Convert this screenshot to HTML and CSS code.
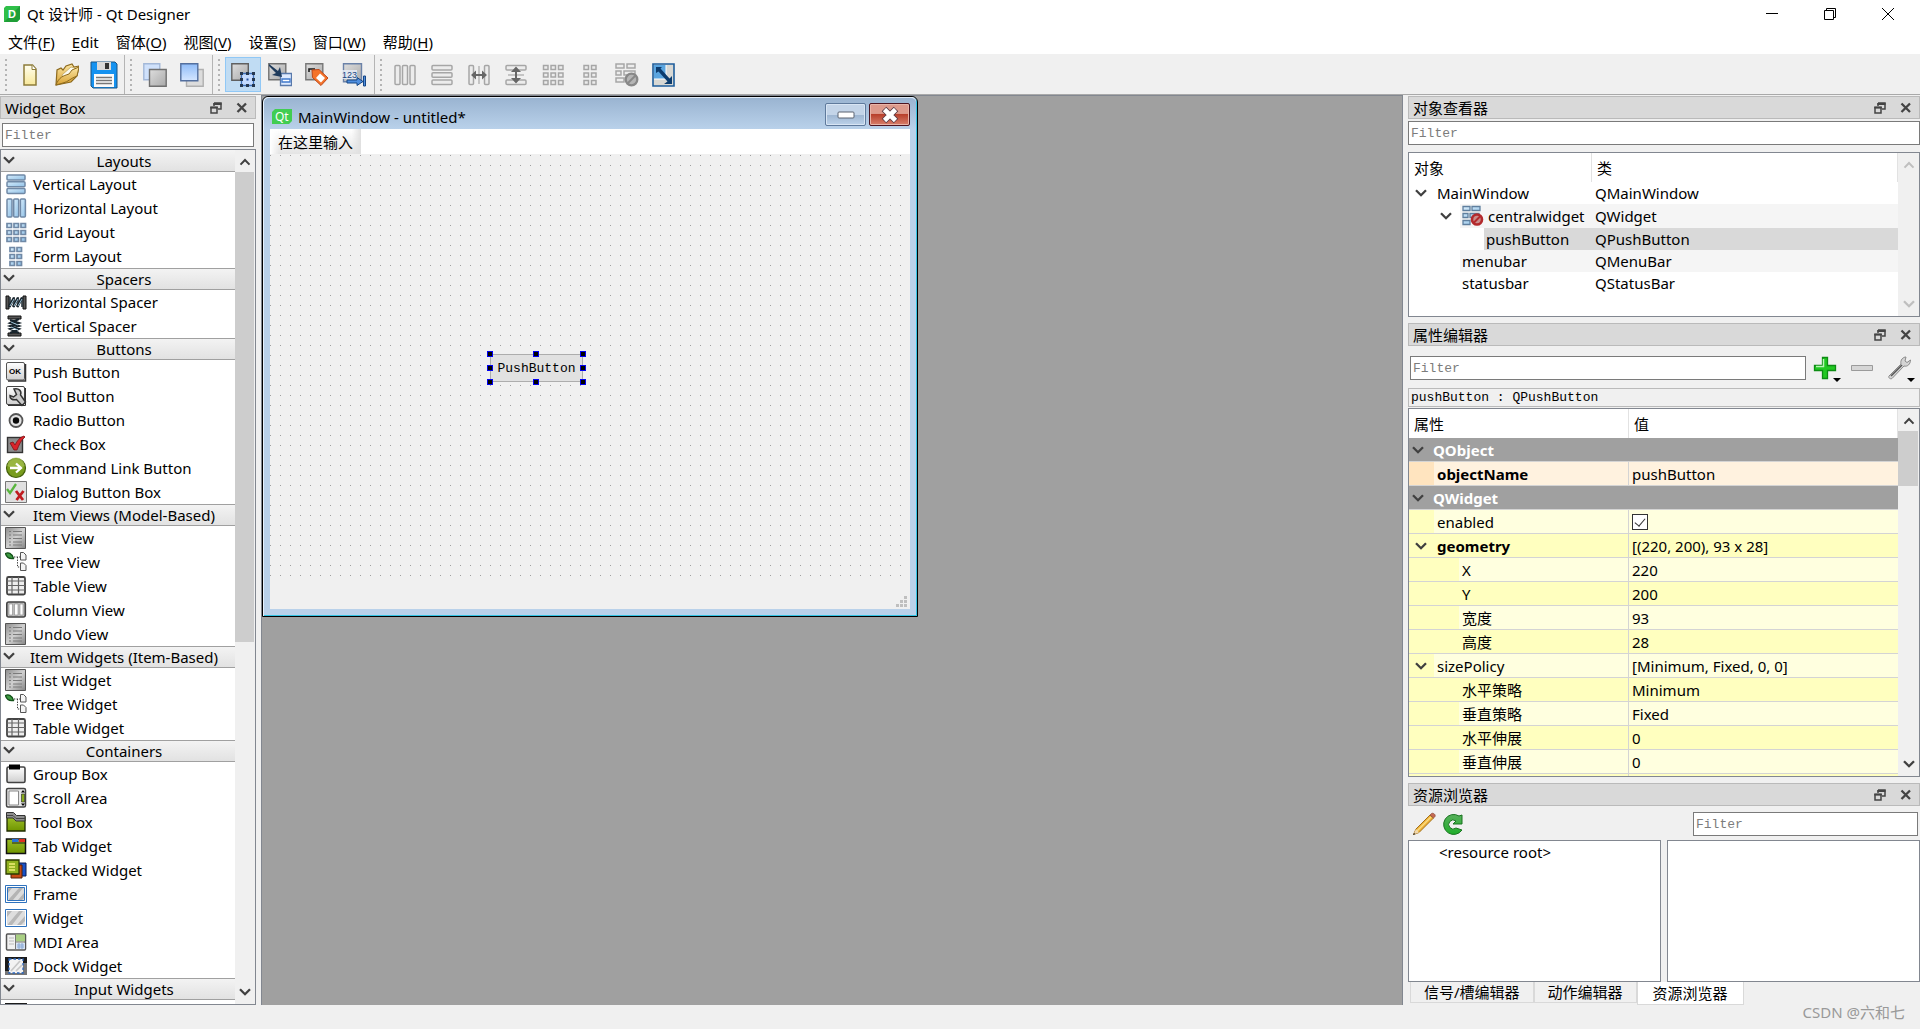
FILE: index.html
```html
<!DOCTYPE html>
<html lang="zh-CN">
<head>
<meta charset="utf-8">
<title>Qt 设计师 - Qt Designer</title>
<link rel="stylesheet" href="styles.css">
</head>
<body>
<svg class="defs" aria-hidden="true">
  <defs>
    <linearGradient id="g-blue" x1="0" y1="0" x2="1" y2="1"><stop offset="0" stop-color="#d6ecfb"/><stop offset="1" stop-color="#8fc0e6"/></linearGradient>
    <linearGradient id="g-pane" x1="0" y1="0" x2="0" y2="1"><stop offset="0" stop-color="#8fbcf8"/><stop offset="1" stop-color="#d5e6ff"/></linearGradient>
    <linearGradient id="g-gray" x1="0" y1="0" x2="1" y2="1"><stop offset="0" stop-color="#dedede"/><stop offset="1" stop-color="#a9a9a9"/></linearGradient>
    <linearGradient id="g-light" x1="0" y1="0" x2="0" y2="1"><stop offset="0" stop-color="#fff"/><stop offset="1" stop-color="#cfcfcf"/></linearGradient>
    <linearGradient id="g-olive" x1="0" y1="0" x2="0" y2="1"><stop offset="0" stop-color="#9cbd28"/><stop offset="1" stop-color="#6f9500"/></linearGradient>
    <linearGradient id="g-folder" x1="0" y1="0" x2="0" y2="1"><stop offset="0" stop-color="#fbe6a4"/><stop offset="1" stop-color="#d9a233"/></linearGradient>
    <linearGradient id="g-page" x1="0" y1="0" x2="0" y2="1"><stop offset="0" stop-color="#fffef0"/><stop offset="1" stop-color="#f8e89a"/></linearGradient>
    <linearGradient id="g-green" x1="0" y1="0" x2="0" y2="1"><stop offset="0" stop-color="#58b05c"/><stop offset="1" stop-color="#1fae2a"/></linearGradient>
    <linearGradient id="g-list" x1="0" y1="0" x2="1" y2="1"><stop offset="0" stop-color="#8c8c8c"/><stop offset=".5" stop-color="#d0d0d0"/><stop offset="1" stop-color="#858585"/></linearGradient>
  </defs>
  <symbol id="chev" viewBox="0 0 12 8"><path d="M1 1.2 6 6.2 11 1.2" fill="none" stroke="currentColor" stroke-width="2.3"/></symbol>
  <symbol id="chev-up" viewBox="0 0 12 8"><path d="M1.5 6.6 6 2 10.500 6.600" fill="none" stroke="currentColor" stroke-width="2"/></symbol>
  <symbol id="float" viewBox="0 0 12 12"><path d="M4 1h7v6H8M4 4V1" fill="none" stroke="#444" stroke-width="1.500"/><path d="M3.500 1h8v2h-8z" fill="#444"/><path d="M1 5.500h6V11H1z" fill="none" stroke="#444" stroke-width="1.500"/><path d="M.3 4.500h7.500v2H.3z" fill="#444"/></symbol>
  <symbol id="cross" viewBox="0 0 12 12"><path d="M1.500 1.500l8.500 8.500M10 1.500 1.500 10" stroke="#444" stroke-width="2.300"/></symbol>

  <symbol id="vbox" viewBox="0 0 22 22"><g fill="url(#g-blue)" stroke="#7089a6" stroke-width="1.500"><rect x="2" y="2" width="18" height="5" rx="1"/><rect x="2" y="8.700" width="18" height="5" rx="1"/><rect x="2" y="15.400" width="18" height="5" rx="1"/></g></symbol>
  <symbol id="hbox" viewBox="0 0 22 22"><g fill="url(#g-blue)" stroke="#7089a6" stroke-width="1.500"><rect x="2" y="2" width="5" height="18" rx="1"/><rect x="8.700" y="2" width="5" height="18" rx="1"/><rect x="15.400" y="2" width="5" height="18" rx="1"/></g></symbol>
  <symbol id="grid" viewBox="0 0 22 22"><g fill="url(#g-blue)" stroke="#7089a6" stroke-width="1.700"><path d="M2 2.500h4.500v4H2zM9 2.500h4.500v4H9zM16 2.500h4.500v4H16zM2 9.500h4.500v4H2zM9 9.500h4.500v4H9zM16 9.500h4.500v4H16zM2 16.500h4.500v4H2zM9 16.500h4.500v4H9zM16 16.500h4.500v4H16z"/></g></symbol>
  <symbol id="form" viewBox="0 0 22 22"><g fill="url(#g-blue)" stroke="#7089a6" stroke-width="1.700"><path d="M5 2.500h4.500v4H5zM12 2.500h4.500v4H12zM5 9.500h4.500v4H5zM12 9.500h4.500v4H12zM5 16.500h4.500v4H5zM12 16.500h4.500v4H12z"/></g></symbol>
  <symbol id="hspacer" viewBox="0 0 22 22"><path d="M1 5h3v13H1zM18 5h3v13h-3z" fill="#555" stroke="#111"/><path d="M5 6v10M9 6v10M13 6v10M17 6v10" stroke="#1c2930" stroke-width="1.500"/><path d="M4 16l5-9M8 16l5-9M12 16l5-9" stroke="#18242c" stroke-width="2.600"/><path d="M5 15l4-7M9 15l4-7M13 15l4-7" stroke="#9bc0d4" stroke-width="1"/></symbol>
  <symbol id="vspacer" viewBox="0 0 22 22"><path d="M3 1h13v3H3zM3 18h13v3H3z" fill="#555" stroke="#111"/><path d="M5 5l9 3-9 3 9 3-9 4M14 4 5 8l9 3-9 3 9 4" fill="none" stroke="#18242c" stroke-width="2"/><path d="M6 7l7 3M6 12l7 3" stroke="#9bc0d4"/></symbol>
  <symbol id="push" viewBox="0 0 22 22"><rect x="1.500" y="1.500" width="18" height="17.500" rx="1.500" fill="url(#g-light)" stroke="#555"/><path d="M20.500 3v17H3" fill="none" stroke="#333" stroke-width="1.500"/></symbol>
  <symbol id="tool" viewBox="0 0 22 22"><rect x="1.500" y="1.500" width="18" height="18" rx="1.500" fill="url(#g-light)" stroke="#444"/><path d="M20.500 3v17.500H3" fill="none" stroke="#333"/><path d="M9 4c5-1 8 2 6.500 6L20.500 17l-3.500 3.500-5.500-6c-4 1-7-1-6.500-4l3.500 1.500 3-2.500z" fill="#c9c9c9" stroke="#333" stroke-width="1.500"/></symbol>
  <symbol id="radio" viewBox="0 0 22 22"><circle cx="11" cy="11.500" r="6.500" fill="#e4e4e4" stroke="#555" stroke-width="1.800"/><circle cx="11" cy="11.500" r="3.200" fill="#0a0a0a"/></symbol>
  <symbol id="check" viewBox="0 0 22 22"><rect x="2.500" y="4.500" width="15" height="15" fill="#8b8b8b" stroke="#333" stroke-width="1.400"/><path d="M5 10l3-1 2 3c2-4 5-8 9-9l1 1c-4 3-6 8-8 13h-3z" fill="#d8242a" stroke="#7d1014" stroke-width=".8"/></symbol>
  <symbol id="cmdlink" viewBox="0 0 22 22"><circle cx="11" cy="11" r="9.500" fill="#789c1d" stroke="#44600b" stroke-width="1.200"/><path d="M2.500 9a8.500 8.500 0 0 1 17 0c-5 3-12 3-17 0z" fill="#a7c253" opacity=".7"/><path d="M5 11h10M11 6.500l5 4.500-5 4.500" fill="none" stroke="#fff" stroke-width="2.300"/></symbol>
  <symbol id="dlgbox" viewBox="0 0 22 22"><path d="M.5.500h21v21H.5z" fill="#e0e0e0" stroke="#777"/><path d="M2 8l3 4 6-9" fill="none" stroke="#59b53e" stroke-width="2.300"/><path d="M11 10l7 9M18.500 10l-7 9" stroke="#c01c20" stroke-width="2.800"/></symbol>
  <symbol id="list" viewBox="0 0 22 22"><path d="M.5.500h20v21H.5z" fill="url(#g-list)" stroke="#555"/><path d="M4 4.500h2m2 0h9M4 8h2m2 0h9M4 11.500h2m2 0h9M4 15h2m2 0h9M4 18h2m2 0h9" stroke="#7b7b7b"/></symbol>
  <symbol id="tree" viewBox="0 0 22 22"><path d="M.500 2.500C3 1 7 2 8.500 7.500 5 8 1.500 6.500.500 2.500z" fill="#3c9a41" stroke="#14521a" stroke-width="1.300"/><path d="M9 6h6M12.500 6v10h4" fill="none" stroke="#333" stroke-dasharray="1.300 1.300"/><path d="M15.500 1.500h3l2.500 2.500v5h-5.500zM15.500 12h3l2.500 2.500v5h-5.500z" fill="#f4f4f4" stroke="#555"/></symbol>
  <symbol id="table" viewBox="0 0 22 22"><rect x="2" y="2" width="18" height="17.500" rx="1.500" fill="#eee" stroke="#444" stroke-width="1.800"/><path d="M2 6h18M2 10.500h18M2 15h18M7 2v17M13.500 2v17" stroke="#666" stroke-width="1.200"/></symbol>
  <symbol id="column" viewBox="0 0 22 22"><rect x="1.800" y="3" width="18.500" height="15" rx="2" fill="#bcbcbc" stroke="#444" stroke-width="1.600"/><path d="M4 5h3.500v11H4zM9.500 5H13v11H9.500zM15 5h3v11h-3z" fill="#fff" stroke="#888" stroke-width=".6"/></symbol>
  <symbol id="group" viewBox="0 0 22 22"><rect x="2" y="4" width="18" height="15.500" rx="1.500" fill="url(#g-light)" stroke="#444" stroke-width="1.600"/><path d="M4 1.500h11v5H4z" fill="#000"/></symbol>
  <symbol id="scroll" viewBox="0 0 22 22"><rect x="1.500" y="1.500" width="19" height="18.500" rx="1.500" fill="#e6e6e6" stroke="#444" stroke-width="1.500"/><path d="M4 4h9.500v14H4z" fill="#fff" stroke="#888"/><path d="M16.500 7h3v8h-3z" fill="#88ab1c" stroke="#222" stroke-width=".6"/><path d="M16 5.500h4L18 3zM16 16.500h4L18 19z"/></symbol>
  <symbol id="toolbox" viewBox="0 0 22 22"><path d="M2 6h18v14H2z" fill="url(#g-olive)" stroke="#1e2a00" stroke-width="1.300"/><path d="M1.500 1.500h7l3 3h8.500v5.500h-9l-3-3h-6.500z" fill="#8f8f8f" stroke="#333"/><path d="M2 4.500h6l3 3h9" fill="none" stroke="#444"/></symbol>
  <symbol id="tabs" viewBox="0 0 22 22"><path d="M1.500 4h19v14.500h-19z" fill="url(#g-olive)" stroke="#111" stroke-width="1.500"/><path d="M7 4h6.500v3H7z" fill="#2870d8"/><path d="M14 4h6v3h-6z" fill="#e03020"/><path d="M7 8h13" stroke="#222"/></symbol>
  <symbol id="stack" viewBox="0 0 22 22"><path d="M11 4h10v13H11z" fill="#1852c8" stroke="#0a1c55"/><path d="M6 6h11v13H6z" fill="#c74a14" stroke="#55200a"/><path d="M1 1h13v14H1z" fill="#8fb01f" stroke="#2c3a00" stroke-width="1.300"/><path d="M4 5h6M4 8h6M4 11h6" stroke="#f2ee7a" stroke-width="1.300"/></symbol>
  <symbol id="frame" viewBox="0 0 22 22"><path d="M.5 2.500h21v17H.5z" fill="#fff" stroke="#2f72bd"/><path d="M2.500 4.500h17v13h-17z" fill="#dcdcdc" stroke="#2f72bd"/><path d="M4 16 14 5h4L8 17H4zM13 17l6-7v5l-2 2zM3 5h4L3 10z" fill="#b4b4b4"/></symbol>
  <symbol id="widget" viewBox="0 0 22 22"><path d="M.5 2.500h21v17H.5z" fill="#fff" stroke="#2f72bd"/><path d="M2 4h18v14H2z" fill="#dedede"/><path d="M3 17 14 4h4L7 18H3zM12 18l8-9v5l-4 4zM2 4h5L2 10z" fill="#b8b8b8"/></symbol>
  <symbol id="mdi" viewBox="0 0 22 22"><rect x="1.500" y="3" width="19" height="16" rx="1" fill="#f1f1f1" stroke="#555" stroke-width="1.500"/><path d="M11 3.500h9v7h-9z" fill="#a9cf83"/><path d="M4 7h5M4 10h5M4 13h5" stroke="#bbb"/><path d="M11 12h9v6h-9z" fill="#d8e4f4"/><path d="M11 11h9M10.500 4v14" stroke="#777"/><path d="M12 14h7M12 16h7M14 12v6M17 12v6" stroke="#8aa9d4"/></symbol>
  <symbol id="dock" viewBox="0 0 22 22"><path d="M0 2h22v18H0z" fill="#1b1b1b"/><path d="M18 8h4v12H0v-4h18z" fill="#777"/><rect x="4" y="4" width="14" height="14" fill="#f3f3f3" stroke="#2a65bd" stroke-width="1.300" stroke-dasharray="2.500 2"/><path d="M6 16 15 6M11 16l6-6" stroke="#c8c8c8" stroke-width="1.700"/></symbol>

  <symbol id="new" viewBox="0 0 24 24"><path d="M6 2h8.500l3.500 4v16H6z" fill="url(#g-page)" stroke="#8d7c3a" stroke-width="1.500"/><path d="M14 2v4.500h4" fill="#fff" stroke="#8d7c3a"/></symbol>
  <symbol id="open" viewBox="0 0 24 24"><path d="M1 22 2 7l4-2 2 2 3-4 6-2 2 3 5-1-2 10-6 6z" fill="url(#g-folder)" stroke="#8d6a1e" stroke-width="1.200"/><path d="M7 12 16 4l4 1-1 5-9 9z" fill="#fbfbf2" stroke="#b99c50" stroke-width=".7"/><path d="M1 22c3-8 7-9 13-11l3-4 7-3-2 9c-6 2-9 6-14 7z" fill="url(#g-folder)" stroke="#8d6a1e"/></symbol>
  <symbol id="save" viewBox="0 0 28 28"><path d="M1 1h24l2 2v24H3l-2-2z" fill="#1592f0" stroke="#1b5584"/><path d="M7 1h14v8H7z" fill="#d9d9d9"/><path d="M15 2h4v6h-4z" fill="#333"/><path d="M4 13h20v13H4z" fill="#fafafa"/><path d="M6 16.500h16M6 19.500h16M6 22.500h16" stroke="#777" stroke-width="1.300"/></symbol>
  <symbol id="back" viewBox="0 0 24 24"><path d="M.8.800h16v16H.8z" fill="#cfe1fb" stroke="#a3b8d8" stroke-width="1.400"/><path d="M6.500 6.500h16.700v16.700H6.500z" fill="url(#g-gray)" stroke="#707070" stroke-width="1.400"/></symbol>
  <symbol id="front" viewBox="0 0 24 24"><path d="M6.500 6.500h16.700v16.700H6.500z" fill="#dcdcdc" stroke="#b0b0b0" stroke-width="1.400"/><path d="M.8.800h17v17H.8z" fill="url(#g-pane)" stroke="#536f9e" stroke-width="1.400"/></symbol>
  <symbol id="editw" viewBox="0 0 24 24"><path d="M.8.800h16.500v16.500H.8z" fill="url(#g-gray)" stroke="#606060" stroke-width="1.400"/><path d="M10.500 10.500h12v12h-12z" fill="#c5dcff" stroke="#3e6fb8" stroke-width="1.300"/><path d="M9 9h3v3H9zM15 9h3v3h-3zM21 9h3v3h-3zM9 15h3v3H9zM21 15h3v3h-3zM9 21h3v3H9zM15 21h3v3h-3zM21 21h3v3h-3z" fill="#26384f"/><path d="M15.500 15.500h2v2h-2z" fill="#2453a0"/></symbol>
  <symbol id="signals" viewBox="0 0 24 24"><path d="M.8.800h17v16h-17z" fill="url(#g-gray)" stroke="#707070" stroke-width="1.400"/><path d="M12.500 10.500h11v12h-11z" fill="#ddeaff" stroke="#5879ab" stroke-width="1.300"/><path d="M14 16h8v3h-8z" fill="#fff" stroke="#3f78cc" stroke-width="1.300"/><path d="M1 1l9 7 2-4 2 10-10-2 4-2-7-7z" fill="#1f3b5c"/></symbol>
  <symbol id="buddy" viewBox="0 0 24 24"><path d="M.8.800h17v16h-17z" fill="url(#g-gray)" stroke="#777" stroke-width="1.400"/><path d="M4 9V6h6" fill="none" stroke="#1d1d1d" stroke-width="1.600"/><path d="M7 7l7-.5 9 8.500-7 7.500-8.500-8z" fill="#f4732a" stroke="#bd481a"/><path d="M15 10.500l5 4.500-4 4.500-5-4.500z" fill="#fff"/></symbol>
  <symbol id="order" viewBox="0 0 26 24"><path d="M2.500.800h18v18h-18z" fill="url(#g-gray)" stroke="#6b82a8" stroke-width="1.400"/><path d="M1 7h15v9H1z" fill="#e8eef8" opacity=".8"/><path d="M6 17h10v-2.500l6 4-6 4V20H6z" fill="#4f8fe0" stroke="#174684"/><path d="M22.500 13h2v10h-2z" fill="#4f8fe0" stroke="#174684"/></symbol>
  <symbol id="t-h" viewBox="0 0 24 24"><g class="tg"><rect x="2" y="2.500" width="5" height="19" rx="1"/><rect x="9.500" y="2.500" width="5" height="19" rx="1"/><rect x="17" y="2.500" width="5" height="19" rx="1"/></g></symbol>
  <symbol id="t-v" viewBox="0 0 24 24"><g class="tg"><rect x="2" y="2.500" width="20" height="4.500" rx="1"/><rect x="2" y="9.800" width="20" height="4.500" rx="1"/><rect x="2" y="17" width="20" height="4.500" rx="1"/></g></symbol>
  <symbol id="t-hs" viewBox="0 0 24 24"><g class="tg"><rect x="2" y="2.500" width="4.500" height="19" rx="1"/><rect x="17.500" y="2.500" width="4.500" height="19" rx="1"/></g><path d="M12 3v18" stroke="#999"/><path d="M4 12l5-4.500V11h6V7.500l5 4.500-5 4.500V13H9v3.500z" fill="#666"/></symbol>
  <symbol id="t-vs" viewBox="0 0 24 24"><g class="tg"><rect x="2" y="2.500" width="20" height="4.500" rx="1"/><rect x="2" y="17" width="20" height="4.500" rx="1"/></g><path d="M4 12h16" stroke="#999"/><path d="M12 3.500l5 5.500h-4v6h4l-5 5.500L7 15h4V9H7z" fill="#666"/></symbol>
  <symbol id="t-g" viewBox="0 0 24 24"><path class="tg" d="M2.500 2.500h4.500v4H2.500zM10 2.500h4.500v4H10zM17.500 2.500H22v4h-4.500zM2.500 10h4.500v4H2.500zM10 10h4.500v4H10zM17.500 10H22v4h-4.500zM2.500 17.500h4.500v4H2.500zM10 17.500h4.500v4H10zM17.500 17.500H22v4h-4.500z"/></symbol>
  <symbol id="t-f" viewBox="0 0 24 24"><path class="tg" d="M6 2.500h4.500v4H6zM13.500 2.500H18v4h-4.500zM6 10h4.500v4H6zM13.500 10H18v4h-4.500zM6 17.500h4.500v4H6zM13.500 17.500H18v4h-4.500z"/></symbol>
  <symbol id="t-b" viewBox="0 0 24 24"><path class="tg" d="M1 1h8v4H1zM12 1h8v4h-8zM1 8h5v4H1zM9 8h11v4H9zM1 15h8v4H1z"/><circle cx="16.500" cy="16.500" r="5.800" fill="#b5b5b5" stroke="#888" stroke-width="2.300"/><path d="M13 20l7-7" stroke="#888" stroke-width="2"/></symbol>
  <symbol id="adjust" viewBox="0 0 24 24"><path d="M1 1h21v22H1z" fill="#d8d8d4" stroke="#1f5e9c" stroke-width="1.600"/><path d="M2 2h12v14H2z" fill="#5aa5e0"/><path d="M14 2v14H2" fill="none" stroke="#fff"/><path d="M4 4h6L8.500 5.500l9 10L20 13v8h-8l3.500-2.500-9-10L4 10z" fill="#0c3c6e"/></symbol>
  <symbol id="broken" viewBox="0 0 22 22"><g fill="url(#g-blue)" stroke="#5f7f9e" stroke-width="1.300"><path d="M1 1.500h7v4H1zM10 1.500h8v4h-8zM1 8.500h5v4H1zM8 8.500h9v4H8zM1 15.500h7v4H1z"/></g><circle cx="15" cy="14.500" r="5" fill="#c98b8b" stroke="#b3292c" stroke-width="2.600"/><path d="M11.500 18l7-7" stroke="#b3292c" stroke-width="2"/></symbol>
  <symbol id="plus" viewBox="0 0 24 24"><path d="M9.500 1.500h5v8h8v5h-8v8h-5v-8h-8v-5h8z" fill="#22c822" stroke="#0e8c14" stroke-width="1.300"/><path d="M10.500 3v7.500H3" fill="none" stroke="#b8f5b4" stroke-width="1.500"/></symbol>
  <symbol id="minus" viewBox="0 0 24 24"><path d="M1.500 9.500h21v5h-21z" fill="#d6d6d6" stroke="#9b9b9b"/></symbol>
  <symbol id="wrench" viewBox="0 0 24 24"><path d="M2 20 14 8c-1-4 2-7 5-7l-1 4 2 1.500L23.500 4c0 4-3 7-6.500 6L5 22.500c-2 1-4-1-3-2.500z" fill="#d4d4d4" stroke="#8a8a8a"/><path d="M4 20 15 9" stroke="#555" stroke-width="1.600"/></symbol>
  <symbol id="pencil" viewBox="0 0 24 24"><path d="M1.500 22.500 4 17 18 3l3.500 3L7 20.500z" fill="#eeb236" stroke="#a36f1b"/><path d="M5 19 19 5" stroke="#fbdc83" stroke-width="1.500"/><path d="M1.500 22.500 4 17l3 3.500z" fill="#f0d8ae"/><path d="M1 23l1-2 1.500 1z" fill="#222"/><path d="M18 3l1.500-1.500c1.500-1 4.500 1 3.500 3L21.500 6z" fill="#c56a52" stroke="#8d4b3c" stroke-width=".7"/></symbol>
  <symbol id="reload" viewBox="0 0 22 22"><path d="M20 17A10 10 0 1 1 17 3l3-1v9h-9l3-3a4.500 4.500 0 1 0 0 7z" fill="url(#g-green)" stroke="#18731f"/></symbol>
</svg>

<header class="titlebar">
  <svg class="app-logo" viewBox="0 0 16 16"><path d="M2 0h14v13l-3 3H0V2z" fill="#2fbf49"/><path d="M0 16 16 0v13l-3 3z" fill="#1f9e37"/><text x="4" y="12" class="logo-d">D</text></svg>
  <h1 class="title">Qt 设计师 - Qt Designer</h1>
  <div class="win-controls">
    <button type="button" aria-label="最小化"><svg width="12" height="12"><path d="M0 5.500h12" stroke="#000"/></svg></button>
    <button type="button" aria-label="还原"><svg width="14" height="14" fill="none" stroke="#000"><path d="M1.500 3.500h9v9h-9zM3.500 3V1.500h9v9H11"/></svg></button>
    <button type="button" aria-label="关闭"><svg width="14" height="14"><path d="M1 1l12 12M13 1 1 13" stroke="#000"/></svg></button>
  </div>
</header>

<nav class="menubar">
  <button type="button">文件(<u>F</u>)</button>
  <button type="button"><u>E</u>dit</button>
  <button type="button">窗体(<u>O</u>)</button>
  <button type="button">视图(<u>V</u>)</button>
  <button type="button">设置(<u>S</u>)</button>
  <button type="button">窗口(<u>W</u>)</button>
  <button type="button">帮助(<u>H</u>)</button>
</nav>

<div class="toolbar" role="toolbar">
  <div class="tool-group">
    <button type="button" aria-label="新建"><svg class="i24"><use href="#new"/></svg></button>
    <button type="button" aria-label="打开"><svg class="i24"><use href="#open"/></svg></button>
    <button type="button" aria-label="保存"><svg class="i28"><use href="#save"/></svg></button>
  </div>
  <div class="tool-group">
    <button type="button" aria-label="置后"><svg class="i24"><use href="#back"/></svg></button>
    <button type="button" aria-label="置前"><svg class="i24"><use href="#front"/></svg></button>
  </div>
  <div class="tool-group">
    <button type="button" class="active" aria-label="编辑窗口部件" aria-pressed="true"><svg class="i24"><use href="#editw"/></svg></button>
    <button type="button" aria-label="编辑信号/槽"><svg class="i24"><use href="#signals"/></svg></button>
    <button type="button" aria-label="编辑伙伴"><svg class="i24"><use href="#buddy"/></svg></button>
    <button type="button" aria-label="编辑 Tab 顺序"><svg class="i26"><use href="#order"/><text x="1" y="15" class="order-text">123</text></svg></button>
  </div>
  <div class="tool-group">
    <button type="button" aria-label="水平布局"><svg class="i24"><use href="#t-h"/></svg></button>
    <button type="button" aria-label="垂直布局"><svg class="i24"><use href="#t-v"/></svg></button>
    <button type="button" aria-label="水平分裂器布局"><svg class="i24"><use href="#t-hs"/></svg></button>
    <button type="button" aria-label="垂直分裂器布局"><svg class="i24"><use href="#t-vs"/></svg></button>
    <button type="button" aria-label="栅格布局"><svg class="i24"><use href="#t-g"/></svg></button>
    <button type="button" aria-label="窗体布局"><svg class="i24"><use href="#t-f"/></svg></button>
    <button type="button" aria-label="打破布局"><svg class="i24"><use href="#t-b"/></svg></button>
    <button type="button" aria-label="调整大小"><svg class="i24"><use href="#adjust"/></svg></button>
  </div>
</div>

<main class="workspace">
  <aside class="dock widget-box">
    <div class="dock-title"><h2>Widget Box</h2><button type="button" aria-label="浮动"><svg><use href="#float"/></svg></button><button type="button" aria-label="关闭"><svg><use href="#cross"/></svg></button></div>
    <input class="filter box-filter" type="text" placeholder="Filter" aria-label="Filter">
    <div class="frame box-frame">
      <div class="box-list">
        <button type="button" class="cat"><svg class="arrow"><use href="#chev"/></svg>Layouts</button>
        <ul>
          <li><svg><use href="#vbox"/></svg>Vertical Layout</li>
          <li><svg><use href="#hbox"/></svg>Horizontal Layout</li>
          <li><svg><use href="#grid"/></svg>Grid Layout</li>
          <li><svg><use href="#form"/></svg>Form Layout</li>
        </ul>
        <button type="button" class="cat"><svg class="arrow"><use href="#chev"/></svg>Spacers</button>
        <ul>
          <li><svg><use href="#hspacer"/></svg>Horizontal Spacer</li>
          <li><svg><use href="#vspacer"/></svg>Vertical Spacer</li>
        </ul>
        <button type="button" class="cat"><svg class="arrow"><use href="#chev"/></svg>Buttons</button>
        <ul>
          <li><svg><use href="#push"/><text x="4" y="13" class="ok-text">OK</text></svg>Push Button</li>
          <li><svg><use href="#tool"/></svg>Tool Button</li>
          <li><svg><use href="#radio"/></svg>Radio Button</li>
          <li><svg><use href="#check"/></svg>Check Box</li>
          <li><svg><use href="#cmdlink"/></svg>Command Link Button</li>
          <li><svg><use href="#dlgbox"/></svg>Dialog Button Box</li>
        </ul>
        <button type="button" class="cat"><svg class="arrow"><use href="#chev"/></svg>Item Views (Model-Based)</button>
        <ul>
          <li><svg><use href="#list"/></svg>List View</li>
          <li><svg><use href="#tree"/></svg>Tree View</li>
          <li><svg><use href="#table"/></svg>Table View</li>
          <li><svg><use href="#column"/></svg>Column View</li>
          <li><svg><use href="#list"/></svg>Undo View</li>
        </ul>
        <button type="button" class="cat"><svg class="arrow"><use href="#chev"/></svg>Item Widgets (Item-Based)</button>
        <ul>
          <li><svg><use href="#list"/></svg>List Widget</li>
          <li><svg><use href="#tree"/></svg>Tree Widget</li>
          <li><svg><use href="#table"/></svg>Table Widget</li>
        </ul>
        <button type="button" class="cat"><svg class="arrow"><use href="#chev"/></svg>Containers</button>
        <ul>
          <li><svg><use href="#group"/></svg>Group Box</li>
          <li><svg><use href="#scroll"/></svg>Scroll Area</li>
          <li><svg><use href="#toolbox"/></svg>Tool Box</li>
          <li><svg><use href="#tabs"/></svg>Tab Widget</li>
          <li><svg><use href="#stack"/></svg>Stacked Widget</li>
          <li><svg><use href="#frame"/></svg>Frame</li>
          <li><svg><use href="#widget"/></svg>Widget</li>
          <li><svg><use href="#mdi"/></svg>MDI Area</li>
          <li><svg><use href="#dock"/></svg>Dock Widget</li>
        </ul>
        <button type="button" class="cat"><svg class="arrow"><use href="#chev"/></svg>Input Widgets</button>
        <ul>
          <li><svg><use href="#dock"/></svg></li>
        </ul>
      </div>
      <div class="scrollbar"><svg class="arrow"><use href="#chev-up"/></svg><div class="track"><div class="thumb thumb-box"></div></div><svg class="arrow"><use href="#chev"/></svg></div>
    </div>
  </aside>

  <section class="mdi">
    <div class="form-window">
      <div class="form-title">
        <svg class="qt-logo" viewBox="0 0 20 15"><path d="M3 0h17v12l-3 3H0V3z" fill="#41cd52"/><text x="3" y="12" class="logo-qt">Qt</text></svg>
        <span class="form-name">MainWindow - untitled*</span>
        <button type="button" class="fw-btn fw-min" aria-label="最小化"><svg width="18" height="8"><rect x="1" y="1" width="16" height="6" rx="1" fill="#fff" stroke="#5a6270"/></svg></button>
        <button type="button" class="fw-btn fw-close" aria-label="关闭"><svg width="20" height="18" viewBox="0 0 20 18"><path d="M4 3l12 12M16 3 4 15" stroke="#5c3b45" stroke-width="6.500"/><path d="M4.500 3.500l11 11M15.500 3.500l-11 11" stroke="#fff" stroke-width="4.600"/></svg></button>
      </div>
      <div class="form-body">
        <div class="form-menu"><button type="button">在这里输入</button></div>
        <div class="form-canvas">
          <div class="selected-widget">
            <button type="button">PushButton</button>
            <i class="h nw"></i><i class="h n"></i><i class="h ne"></i><i class="h w"></i><i class="h e"></i><i class="h sw"></i><i class="h s"></i><i class="h se"></i>
          </div>
        </div>
        <div class="form-status"><svg width="11" height="11" fill="#bfbfbf"><path d="M8 0h3v3H8zM4 4h3v3H4zM8 4h3v3H8zM0 8h3v3H0zM4 8h3v3H4zM8 8h3v3H8z"/></svg></div>
      </div>
    </div>
  </section>

  <aside class="right">
    <section class="dock">
      <div class="dock-title"><h2>对象查看器</h2><button type="button" aria-label="浮动"><svg><use href="#float"/></svg></button><button type="button" aria-label="关闭"><svg><use href="#cross"/></svg></button></div>
      <input class="filter obj-filter" type="text" placeholder="Filter" aria-label="Filter">
      <div class="frame obj-frame">
        <table class="objects">
          <colgroup><col class="c-obj"><col></colgroup>
          <thead><tr><th>对象</th><th>类</th></tr></thead>
          <tbody>
            <tr><td><div class="cell"><svg class="arrow"><use href="#chev"/></svg><span class="name">MainWindow</span></div></td><td>QMainWindow</td></tr>
            <tr class="alt tall"><td><div class="cell lv1"><svg class="arrow"><use href="#chev"/></svg><span class="name"><svg class="i22"><use href="#broken"/></svg>centralwidget</span></div></td><td>QWidget</td></tr>
            <tr class="sel"><td><div class="cell lv2"><span class="name">pushButton</span></div></td><td>QPushButton</td></tr>
            <tr class="alt"><td><div class="cell lv1"><span class="arrow"></span><span class="name">menubar</span></div></td><td>QMenuBar</td></tr>
            <tr><td><div class="cell lv1"><span class="arrow"></span><span class="name">statusbar</span></div></td><td>QStatusBar</td></tr>
          </tbody>
        </table>
        <div class="scrollbar disabled"><svg class="arrow"><use href="#chev-up"/></svg><div class="track"></div><svg class="arrow"><use href="#chev"/></svg></div>
      </div>
    </section>

    <section class="dock grow">
      <div class="dock-title"><h2>属性编辑器</h2><button type="button" aria-label="浮动"><svg><use href="#float"/></svg></button><button type="button" aria-label="关闭"><svg><use href="#cross"/></svg></button></div>
      <div class="prop-tools">
        <input class="filter" type="text" placeholder="Filter" aria-label="Filter">
        <button type="button" class="drop" aria-label="添加动态属性"><svg class="i24"><use href="#plus"/></svg></button>
        <button type="button" aria-label="删除动态属性"><svg class="i24"><use href="#minus"/></svg></button>
        <button type="button" class="drop" aria-label="配置属性编辑器"><svg class="i24"><use href="#wrench"/></svg></button>
      </div>
      <div class="prop-object">pushButton : QPushButton</div>
      <div class="frame prop-frame">
        <div class="prop-view">
        <table class="props">
          <colgroup><col class="c-prop"><col></colgroup>
          <thead><tr><th>属性</th><th>值</th></tr></thead>
          <tbody>
            <tr class="group"><th colspan="2"><div class="cell"><svg class="arrow"><use href="#chev"/></svg>QObject</div></th></tr>
            <tr class="peach"><td><div class="cell"><span class="pad"></span><b>objectName</b></div></td><td>pushButton</td></tr>
            <tr class="group"><th colspan="2"><div class="cell"><svg class="arrow"><use href="#chev"/></svg>QWidget</div></th></tr>
            <tr class="lite"><td><div class="cell"><span class="pad"></span><label for="enabled">enabled</label></div></td><td><input id="enabled" class="tick" type="checkbox" checked></td></tr>
            <tr><td><div class="cell"><span class="pad"><svg class="arrow"><use href="#chev"/></svg></span><b>geometry</b></div></td><td>[(220, 200), 93 x 28]</td></tr>
            <tr class="lite"><td><div class="cell"><span class="pad deep"></span>X</div></td><td>220</td></tr>
            <tr><td><div class="cell"><span class="pad deep"></span>Y</div></td><td>200</td></tr>
            <tr class="lite"><td><div class="cell"><span class="pad deep"></span>宽度</div></td><td>93</td></tr>
            <tr><td><div class="cell"><span class="pad deep"></span>高度</div></td><td>28</td></tr>
            <tr class="lite"><td><div class="cell"><span class="pad"><svg class="arrow"><use href="#chev"/></svg></span>sizePolicy</div></td><td>[Minimum, Fixed, 0, 0]</td></tr>
            <tr><td><div class="cell"><span class="pad deep"></span>水平策略</div></td><td>Minimum</td></tr>
            <tr class="lite"><td><div class="cell"><span class="pad deep"></span>垂直策略</div></td><td>Fixed</td></tr>
            <tr><td><div class="cell"><span class="pad deep"></span>水平伸展</div></td><td>0</td></tr>
            <tr class="lite"><td><div class="cell"><span class="pad deep"></span>垂直伸展</div></td><td>0</td></tr>
            <tr><td></td><td></td></tr>
          </tbody>
        </table>
        </div>
        <div class="scrollbar"><svg class="arrow"><use href="#chev-up"/></svg><div class="track"><div class="thumb thumb-prop"></div></div><svg class="arrow"><use href="#chev"/></svg></div>
      </div>
    </section>

    <section class="dock">
      <div class="dock-title"><h2>资源浏览器</h2><button type="button" aria-label="浮动"><svg><use href="#float"/></svg></button><button type="button" aria-label="关闭"><svg><use href="#cross"/></svg></button></div>
      <div class="res-tools">
        <button type="button" aria-label="编辑资源"><svg class="i24"><use href="#pencil"/></svg></button>
        <button type="button" aria-label="重新载入"><svg class="i22"><use href="#reload"/></svg></button>
        <input class="filter" type="text" placeholder="Filter" aria-label="Filter">
      </div>
      <div class="res-panes"><div class="frame">&lt;resource root&gt;</div><div class="frame"></div></div>
      <div class="tabs" role="tablist">
        <button type="button" role="tab">信号/槽编辑器</button>
        <button type="button" role="tab">动作编辑器</button>
        <button type="button" role="tab" class="current" aria-selected="true">资源浏览器</button>
      </div>
    </section>
  </aside>
</main>
<footer class="statusbar">CSDN @六和七</footer>
</body>
</html>
```
FILE: styles.css
```css
* { box-sizing: border-box; }

body {
  margin: 0;
  height: 100vh;
  display: flex;
  flex-direction: column;
  overflow: hidden;
  background: #f0f0f0;
  color: #000;
  font: 15px/20px "Noto Sans", "Noto Sans CJK SC", sans-serif;
}

h1, h2, ul { margin: 0; padding: 0; font-size: inherit; font-weight: normal; }
ul { list-style: none; }
button { font: inherit; color: inherit; background: none; border: 0; padding: 0; margin: 0; }
svg { display: block; flex: none; }
.defs { position: absolute; width: 0; height: 0; }

.i22 { width: 22px; height: 22px; }
.i24 { width: 24px; height: 24px; }
.i26 { width: 26px; height: 24px; }
.i28 { width: 28px; height: 28px; }
.tg { fill: #ececec; stroke: #a6a6a6; stroke-width: 1.5px; }
.ok-text { font: bold 8px "Liberation Sans", sans-serif; }
.order-text { font: 9px "Liberation Sans", sans-serif; fill: #174684; }
.logo-d { font: bold 11px "Liberation Sans", sans-serif; fill: #fff; }
.logo-qt { font: 12px "Noto Sans", sans-serif; fill: #fff; }
.arrow { width: 12px; height: 8px; color: #404040; }

/* Title bar and menu */
.titlebar { flex: none; height: 28px; padding: 0 3px 0 4px; display: flex; align-items: center; gap: 7px; background: #fff; }
.app-logo { width: 16px; height: 16px; overflow: visible; }
.title { flex: 1; }
.win-controls { display: flex; }
.win-controls button { width: 58px; height: 28px; display: flex; align-items: center; justify-content: center; }
.menubar { flex: none; height: 27px; padding: 1px 8px 0; display: flex; align-items: center; gap: 17px; background: #fff; border-bottom: 1px solid #f0f0f0; }
u { text-underline-offset: 2px; }

/* Tool bar */
.toolbar { flex: none; height: 40px; display: flex; border-bottom: 1px solid #a9a9a9; }
.tool-group { display: flex; align-items: center; gap: 1px; padding: 0 2px 0 5px; border-right: 1px solid #b4b4b4; }
.tool-group:last-child { border-right: 0; }
.tool-group::before { content: ""; width: 2px; height: 32px; margin-right: 4px; background: repeating-linear-gradient(#b4b4b4 0 2px, transparent 2px 5px); }
.tool-group button { width: 36px; height: 35px; display: flex; align-items: center; justify-content: center; }
.tool-group .active { background: #c0dcf3; border: 1px solid #90c8f6; }

/* Docks */
.workspace { flex: 1; min-height: 0; display: flex; }
.dock { display: flex; flex-direction: column; }
.dock-title { flex: none; height: 23px; margin-top: 1px; padding: 0 7px 0 4px; display: flex; align-items: center; gap: 14px; background: #d9d9d9; border: 1px solid #bababa; }
.dock-title h2 { flex: 1; }
.dock-title svg { width: 12px; height: 12px; }
.filter { flex: none; height: 24px; padding: 0 2px; border: 1px solid #7a7a7a; background: #fff; font: 13px "Liberation Mono", monospace; }
.filter::placeholder { color: #7c7c7c; opacity: 1; }
.frame { display: flex; border: 1px solid #828790; background: #fff; }

.scrollbar { flex: none; width: 20px; padding: 8px 0; display: flex; flex-direction: column; align-items: center; gap: 6px; background: #f0f0f0; }
.scrollbar.disabled .arrow { color: #bfbfbf; }
.track { flex: 1; align-self: stretch; }
.thumb { background: #cdcdcd; margin-right: 1px; }
.thumb-box { height: 58%; }
.thumb-prop { height: 17%; }

.widget-box { flex: none; width: 256px; }
.box-filter { margin: 4px 2px 2px; }
.box-frame { flex: 1; min-height: 0; }
.box-list { flex: 1; overflow: hidden; }
.cat { width: 100%; height: 22px; padding: 0 2px; display: flex; align-items: center; background: linear-gradient(#f3f3f3, #e2e2e2); border-top: 1px solid #a0a0a0; border-bottom: 1px solid #a0a0a0; }
.cat .arrow { margin: 0 auto 3px 0; }
.cat::after { content: ""; margin-right: auto; }
.cat:first-child { border-top-color: #f3f3f3; }
.box-list li { height: 24px; padding-left: 4px; display: flex; align-items: center; gap: 6px; }
.box-list li svg { width: 22px; height: 22px; }

/* Form being edited */
.mdi { flex: 1; min-width: 0; margin-left: 5px; position: relative; background: #a0a0a0; border: solid #828790; border-width: 1px 1px 0; }
.form-window { position: absolute; left: 0; top: 0; width: 656px; padding: 0 7px 7px; background: #b9d1ea; border: 1px solid #000; border-radius: 6px 6px 0 0; box-shadow: inset 1px 1px #e8f3ff, inset -1px -1px #34c4e4; }
.form-title { height: 32px; margin: 0 -6px; padding: 5px 6px 0 8px; display: flex; gap: 3px; background: linear-gradient(#9ab4d1, #b9d1ea); border-radius: 5px 5px 0 0; border-top: 1px solid #dfeaf6; }
.qt-logo { width: 20px; height: 15px; margin-top: 6px; overflow: visible; }
.form-name { flex: 1; padding: 4px 0 0 3px; }
.fw-btn { width: 41px; height: 23px; display: flex; align-items: center; justify-content: center; border: 1px solid #5f7a9c; border-radius: 2px; }
.fw-min { background: linear-gradient(#c3d4e8 50%, #9cb4d0 50%, #bcd2ea); box-shadow: inset 0 0 0 1px #d8e5f4; }
.fw-close { border-color: #4d1420; background: linear-gradient(#dd9a8c 45%, #b8402c 50%, #d8806c); box-shadow: inset 0 0 0 1px #e8b4a8; }
.form-body { height: 480px; display: flex; flex-direction: column; background: #f0f0f0; }
.form-menu { flex: none; height: 25px; display: flex; background: #fff; }
.form-menu button { padding: 0 8px; background: linear-gradient(90deg, #fff, transparent 10% 90%, #e0e0e0), linear-gradient(#fff, #e4e4e4); }
.form-canvas { flex: 1; position: relative; background: conic-gradient(from 0deg at 1px 1px, transparent 270deg, #a0a0a0 270deg) 0 1px / 10px 10px; }
.form-status { flex: none; height: 24px; padding: 11px 3px 2px; display: flex; justify-content: flex-end; }
.selected-widget { position: absolute; left: 220px; top: 200px; width: 93px; height: 28px; }
.selected-widget button { width: 100%; height: 100%; border: 1px solid #adadad; background: #e1e1e1; font: 13px "Liberation Mono", monospace; }
.h { position: absolute; width: 6px; height: 6px; background: #000; border: 1px solid #0000f0; }
.nw, .w, .sw { left: -3px; }
.n, .s { left: 43px; }
.ne, .e, .se { right: -3px; }
.nw, .n, .ne { top: -3px; }
.w, .e { top: 11px; }
.sw, .s, .se { bottom: -3px; }

/* Right column */
.right { flex: none; width: 517px; padding-left: 5px; display: flex; flex-direction: column; gap: 5px; }
.grow { flex: 1; min-height: 0; }
.obj-filter { margin: 2px 0 7px; }
.obj-frame { height: 165px; align-items: flex-start; }
.obj-frame .scrollbar { align-self: stretch; }
.right .scrollbar { width: 21px; margin-left: auto; }

table { flex: 1; width: 100%; table-layout: fixed; border-spacing: 0; }
td, th { padding: 0; height: 22px; text-align: left; font-weight: normal; white-space: nowrap; line-height: 20px; }
thead th { height: 29px; padding: 0 5px; border-right: 1px solid #e2e2e2; }
td + td { padding-left: 3px; }
.cell { display: flex; align-items: center; height: 100%; }
.c-obj { width: 183px; }
.objects .cell { height: 22px; padding-left: 6px; gap: 5px; }
.objects .lv1 { padding-left: 31px; gap: 8px; }
.objects .lv2 { padding-left: 75px; }
.objects .name { flex: 1; height: 100%; display: flex; align-items: center; padding-left: 2px; gap: 4px; }
.objects .cell:not(.lv1):not(.lv2) .name { padding-left: 5px; }
.objects .tall .cell, .objects .tall td { height: 24px; }
.alt .name, .alt td + td { background: #f5f5f5; }
.sel .name, .sel td + td { background: #d9d9d9; }

.prop-tools { flex: none; display: flex; align-items: center; gap: 13px; padding: 10px 9px 8px 2px; }
.prop-tools .filter { flex: 1; margin-right: -6px; }
.prop-tools button { position: relative; }
.drop::after { content: ""; position: absolute; right: -4px; bottom: -2px; border: solid transparent; border-width: 4px 4px 0; border-top-color: #000; }
.prop-object { flex: none; height: 19px; margin-bottom: 1px; padding-left: 2px; border: 1px solid #bababa; font: 13px/17px "Liberation Mono", monospace; }
.prop-frame { flex: 1; min-height: 0; }
.prop-view { flex: 1; min-height: 0; overflow: hidden; }
.c-prop { width: 220px; }
.props tbody td, .props tbody th { height: 24px; border-bottom: 1px solid #d4d4d4; }
.props .cell { height: 23px; }
.props td { background: #ffffbf; }
.props td:first-child { border-right: 1px solid #d4d4d4; }
.props .lite td { background: #ffffdf; }
.props .peach td { background: #fff2df; }
.props .group th { background: #a0a0a0; color: #fff; font-weight: bold; }
.group .arrow { margin: 0 9px 0 3px; }
.pad { width: 25px; height: 100%; margin-right: 3px; display: flex; align-items: center; padding-left: 6px; background: #ffffbf; }
.peach .pad { background: #ffe4bf; }
.deep { width: 50px; }
.tick { appearance: none; display: block; width: 16px; height: 16px; margin: 0; border: 1px solid #333; background: #fff; position: relative; }
.tick:checked::after { content: ""; position: absolute; left: 4px; top: 1px; width: 5px; height: 9px; border: solid #333; border-width: 0 1px 1px 0; rotate: 40deg; }

.res-tools { display: flex; align-items: center; gap: 6px; padding: 6px 2px 4px 4px; }
.res-tools .filter { width: 225px; margin-left: auto; }
.res-panes { height: 142px; display: flex; gap: 6px; }
.res-panes .frame { flex: 1; padding: 1px 30px; }
.tabs { height: 23px; padding-left: 2px; display: flex; align-items: flex-start; }
.tabs button { height: 21px; padding: 0 13px; border: 1px solid #d9d9d9; border-top: 0; line-height: 19px; }
.tabs .current { height: 23px; padding: 0 15px; background: #fff; }

.statusbar { flex: none; height: 24px; padding: 0 15px 10px; display: flex; align-items: center; justify-content: flex-end; color: #999; }
```
